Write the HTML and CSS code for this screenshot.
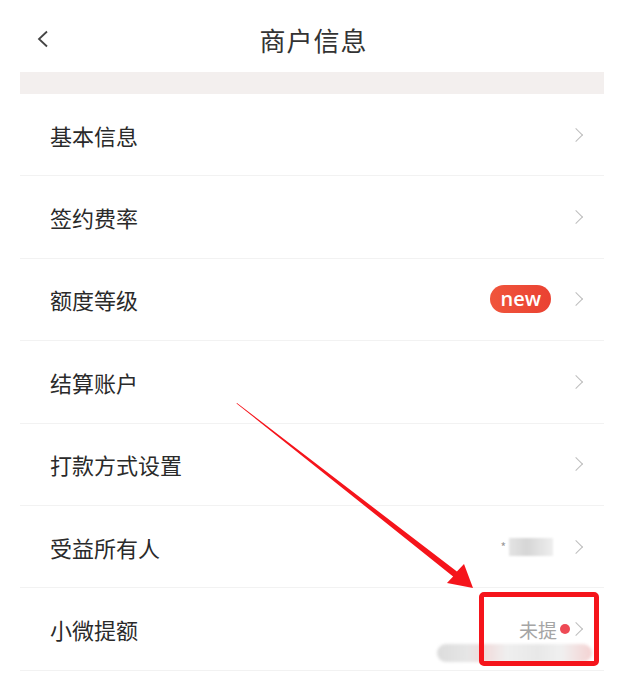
FILE: index.html
```html
<!DOCTYPE html>
<html lang="zh-CN">
<head>
    <meta charset="UTF-8">
    <meta name="viewport" content="width=device-width, initial-scale=1.0">
    <title>商户信息</title>
    <link rel="stylesheet" href="styles.css">
</head>
<body>
    <div class="page">
        <!-- 顶部导航 -->
        <div class="nav-bar">
            <span class="back">
                <svg width="14" height="18" viewBox="0 0 14 18"><path d="M11 1.5 L3 9 L11 16.5" fill="none" stroke="#444" stroke-width="1.8"/></svg>
            </span>
            <h1>商户信息</h1>
        </div>
        <div class="gap-band"></div>

        <!-- 信息列表 -->
        <div class="menu-list">
            <div class="menu-item"><span class="label">基本信息</span><span class="extra"><i class="arrow"></i></span></div>
            <div class="menu-item"><span class="label">签约费率</span><span class="extra"><i class="arrow"></i></span></div>
            <div class="menu-item"><span class="label">额度等级</span><span class="extra"><span class="badge-new">new</span><i class="arrow"></i></span></div>
            <div class="menu-item"><span class="label">结算账户</span><span class="extra"><i class="arrow"></i></span></div>
            <div class="menu-item"><span class="label">打款方式设置</span><span class="extra"><i class="arrow"></i></span></div>
            <div class="menu-item"><span class="label">受益所有人</span><span class="extra"><span class="masked">*<b></b></span><i class="arrow"></i></span></div>
            <div class="menu-item"><span class="label">小微提额</span><span class="extra"><span class="status">未提</span><span class="dot"></span><i class="arrow tight"></i></span></div>
        </div>
    </div>

    <!-- 标注 -->
    <svg class="mark-arrow" width="624" height="673" viewBox="0 0 624 673">
        <polygon points="237,403 456.9,571.6 464,564 473,588 447,583 453.1,576.4 236.5,403.5" fill="#f5141b"/>
    </svg>
    <div class="blur-pill"></div>
    <div class="mark-box"></div>
</body>
</html>
```
FILE: styles.css
```css
* {
    margin: 0;
    padding: 0;
    box-sizing: border-box;
    font-family: 'Noto Sans CJK SC', 'Noto Sans', sans-serif;
}

body {
    background-color: #fff;
    width: 624px;
    height: 673px;
    overflow: hidden;
    position: relative;
}

.nav-bar {
    height: 72px;
    display: flex;
    align-items: center;
    justify-content: center;
    position: relative;
}

.nav-bar h1 {
    font-size: 26px;
    font-weight: 400;
    color: #333;
    letter-spacing: 1px;
    margin-top: 6px;
    margin-left: 3px;
}

.back {
    position: absolute;
    left: 36px;
    top: 30px;
    display: flex;
}

.gap-band {
    height: 22px;
    margin: 0 20px;
    background-color: #f3efee; /* 浅灰分隔条 */
}

.menu-list {
    margin: 0 20px;
}

.menu-item {
    height: 82.4px;
    display: flex;
    align-items: center;
    justify-content: space-between;
    padding: 0 19px 0 30px;
    border-bottom: 1px solid #f2f2f2;
}

.label {
    font-size: 22px;
    color: #2a2a2a;
}

.extra {
    display: flex;
    align-items: center;
}

.arrow {
    width: 10px;
    height: 10px;
    border-top: 1.8px solid #bdbdbd;
    border-right: 1.8px solid #bdbdbd;
    transform: rotate(45deg);
    margin-left: 18px;
    margin-right: 4px;
}

.arrow.tight {
    margin-left: 1px;
}

.badge-new {
    background: linear-gradient(90deg, #f0553c, #ea4232);
    color: #fff;
    font-size: 20px;
    font-weight: 600;
    line-height: 28px;
    height: 28px;
    padding: 0 10px;
    border-radius: 14px;
    font-family: 'Open Sans', 'Noto Sans', sans-serif;
    margin-right: 2px;
}

.masked {
    display: flex;
    align-items: center;
    color: #999;
    font-size: 12px;
}

.masked b {
    width: 44px;
    height: 18px;
    margin-left: 3px;
    background: linear-gradient(90deg, #e4e4e4, #d6d6d6 40%, #e2e2e2 70%, #efefef);
    filter: blur(1px);
}

.status {
    font-size: 19px;
    color: #a5a5a5;
}

.dot {
    width: 10px;
    height: 10px;
    border-radius: 50%;
    background-color: #ee4a55;
    margin-left: 3px;
}

.mark-arrow {
    position: absolute;
    left: 0;
    top: 0;
    pointer-events: none;
}

.mark-box {
    position: absolute;
    left: 479px;
    top: 592px;
    width: 120px;
    height: 74px;
    border: 5px solid #f5141b;
    border-radius: 5px;
}

.blur-pill {
    position: absolute;
    left: 437px;
    top: 644px;
    width: 155px;
    height: 18px;
    border-radius: 9px;
    background: linear-gradient(90deg, #dcdcdc, #e6e6e6 20%, #f1dada 30%, #efefef 45%, #e8e8e8 65%, #f0f0f0 80%, #f4d2d2);
    filter: blur(1.5px);
}
```
